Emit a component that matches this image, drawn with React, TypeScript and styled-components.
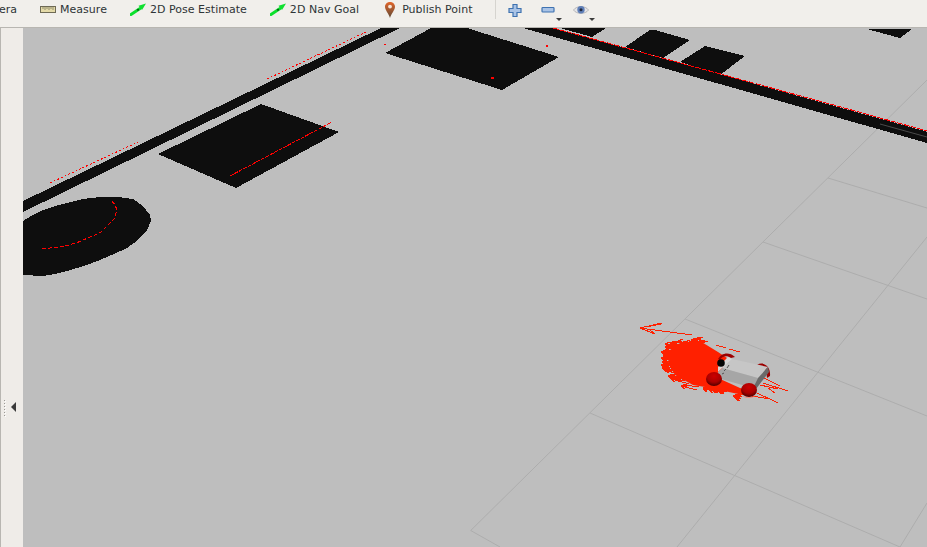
import React from "react";
import styled, { createGlobalStyle } from "styled-components";

const Global = createGlobalStyle`
  html, body { margin: 0; padding: 0; background: #bebebe; overflow: hidden; }
`;

const Page = styled.div`
  width: 927px;
  height: 547px;
  display: flex;
  flex-direction: column;
  overflow: hidden;
  font-family: "DejaVu Sans", sans-serif;
`;

const Toolbar = styled.div`
  height: 27px;
  flex: none;
  display: flex;
  align-items: flex-start;
  gap: 23px;
  background: #f1efeb;
  border-bottom: 1px solid #b8b6b1;
`;

const EdgeLabel = styled.div`
  width: 17px;
  height: 19px;
  display: flex;
  justify-content: flex-end;
  align-items: center;
  font-size: 11px;
  color: #2e3436;
`;

const Tool = styled.div`
  height: 19px;
  display: flex;
  align-items: center;
  gap: 4px;
  font-size: 11px;
  letter-spacing: 0.025px;
  color: #2e3436;
  white-space: nowrap;
`;

const Separator = styled.div`
  width: 1px;
  height: 19px;
  background: #d6d4cf;
`;

const IconGroup = styled.div`
  display: flex;
  gap: 17px;
  margin-left: -12px;
`;

const IconButton = styled.div`
  position: relative;
  width: 16px;
  height: 19px;
  display: flex;
  align-items: center;
  justify-content: center;
`;

const MenuArrow = styled.span`
  position: absolute;
  left: 16px;
  top: 18px;
  width: 0;
  height: 0;
  border-left: 3px solid transparent;
  border-right: 3px solid transparent;
  border-top: 3px solid #3c3c3c;
`;

const Body = styled.div`
  flex: 1;
  display: flex;
  min-height: 0;
`;

const SideStrip = styled.div`
  width: 23px;
  flex: none;
  box-sizing: border-box;
  background: #efece8;
  border-left: 1px solid #b8b6b1;
  padding: 372px 0 0 3px;
  display: flex;
  align-items: flex-start;
  gap: 6px;
  height: 519px;
`;

const Grip = styled.div`
  display: flex;
  flex-direction: column;
  gap: 2px;
`;

const GripDot = styled.span`
  width: 1px;
  height: 1px;
  background: #9a9894;
  box-shadow: 1px 1px 0 #ffffff;
`;

const CollapseArrow = styled.span`
  width: 0;
  height: 0;
  margin-top: 2px;
  border-top: 5px solid transparent;
  border-bottom: 5px solid transparent;
  border-right: 5px solid #3a3a3a;
`;

const Viewport = styled.svg`
  display: block;
  width: 904px;
  height: 519px;
  background: #bebebe;
  flex: none;
`;

const Ruler = () => (
  <svg width="16" height="16" viewBox="0 0 16 16">
    <rect x="0.5" y="4.5" width="15" height="6" fill="#e4daa8" stroke="#6e6a55" />
    <path d="M3 5v2M5 5v3M7 5v2M9 5v3M11 5v2M13 5v3" stroke="#6e6a55" strokeWidth="0.7" />
  </svg>
);

const GreenArrow = () => (
  <svg width="16" height="16" viewBox="0 0 16 16">
    <path d="M1 12.5 L10 6.5" stroke="#0be02c" strokeWidth="3" strokeLinecap="round" />
    <path d="M16 1.5 L8.5 3.8 L12 8 Z" fill="#10e030" />
    <circle cx="8" cy="7.8" r="1.1" fill="#0a5a18" />
  </svg>
);

const Pin = () => (
  <svg width="16" height="18" viewBox="0 0 16 18">
    <defs>
      <linearGradient id="pinGrad" x1="0" y1="0" x2="0" y2="1">
        <stop offset="0" stopColor="#e2662a" />
        <stop offset="1" stopColor="#5e4a38" />
      </linearGradient>
    </defs>
    <path
      d="M8 1 C4.8 1 3 3.2 3 5.8 C3 9 6.6 12.6 8 17 C9.4 12.6 13 9 13 5.8 C13 3.2 11.2 1 8 1 Z"
      fill="url(#pinGrad)"
    />
    <circle cx="8" cy="5.6" r="1.9" fill="#f4e6d8" />
  </svg>
);

const Plus = () => (
  <svg width="16" height="16" viewBox="0 0 16 16">
    <path
      d="M6 2.5h4v4h4v4h-4v4H6v-4H2v-4h4z"
      fill="#a9c3e6"
      stroke="#3f72b0"
      strokeWidth="1.2"
    />
  </svg>
);

const Minus = () => (
  <svg width="16" height="16" viewBox="0 0 16 16">
    <rect x="2" y="5.5" width="12" height="4.5" rx="0.8" fill="#a9c3e6" stroke="#3f72b0" strokeWidth="1.2" />
  </svg>
);

const Eye = () => (
  <svg width="16" height="16" viewBox="0 0 16 16">
    <path d="M0.5 8 C3.5 3.5 12.5 3.5 15.5 8 C12.5 12.5 3.5 12.5 0.5 8 Z" fill="#e6e6e8" stroke="#a8a8ac" strokeWidth="0.8" />
    <circle cx="8" cy="7.8" r="3.7" fill="#5f7fb8" />
    <circle cx="8" cy="7.8" r="1.5" fill="#232a3e" />
  </svg>
);

/* ---- 3D scene data, in page coordinates ---- */

const walls = [
  "23,201 381,28 400,28 23,212",
  "523,28 553,28 927,131.7 927,143",
  "158,154 261,104 339,132 236,188",
  "385,53 431,28 467,28 559,57 502,90",
  "560,28 606,28 592,37",
  "625,47 650,30 655,30 690,40 663,58",
  "680,62 705,46 745,56 720,75",
  "867,29 912,29 900,38",
  "23,221 33,215 43,210 55,206 67,203 83,199 100,197 118,197 133,199 143,206 150,215 151,221 147,230 138,240 127,248 114,254 100,260 84,266 67,271 55,274 43,276 23,275",
];

const gridLines = [
  "470.7,530.5 927,80",
  "470.7,530.5 500,547",
  "590,413 900,547",
  "685,319 927,416",
  "763,242 927,299",
  "828,178 927,208",
  "677,547 927,237",
  "900,547 927,503",
];

const redDashes = [
  { d: "553,28 632,49.7 735,78 830,104 927,131", dash: "6 1" },
  { d: "267,79 368,31", dash: "2 2" },
  { d: "50,183 138,142", dash: "2 2" },
  { d: "230,176 332,122", dash: "4 1" },
  {
    d: "41.7,249 50,248 63,246.7 77,242.7 90,237 100,232.7 107,226 115,218 116.7,210 115,204 111,201",
    dash: "4 2",
  },
];

const blob =
  "670,350 680,343 700,341 718,352 727,358 718,378 740,388 757,392 748,396 705,387 693,385 675,375 668,363";

function seeded(seed: number) {
  let s = seed;
  return () => {
    s = (s * 16807) % 2147483647;
    return s / 2147483647;
  };
}

const particlePaths = (() => {
  const r = seeded(4211);
  const out: string[] = [];
  const arrow = (x: number, y: number, dx: number, dy: number) => {
    const a = Math.round(x);
    const b = Math.round(y);
    out.push(`M${a} ${b}l${dx} ${dy}M${a} ${b}l5 -2M${a} ${b}l4 3`);
  };
  // left fringe
  for (let i = 0; i < 36; i++) {
    const t = r();
    const x = 660 + Math.pow(t - 0.35, 2) * 55 + r() * 5;
    const y = 344 + t * 44;
    arrow(x, y, 10 + Math.round(r() * 6), 2 + Math.round(r() * 2));
  }
  // top fringe
  for (let i = 0; i < 14; i++) {
    const x = 664 + r() * 36;
    const y = 345 - (x - 664) * 0.1 - r() * 3;
    arrow(x, y, 9 + Math.round(r() * 5), 3);
  }
  // bottom fringes
  for (let i = 0; i < 16; i++) {
    const x = 703 + r() * 20;
    const y = 385 + (x - 703) * 0.25 + r() * 4;
    arrow(x, y, 7, 1);
  }
  for (let i = 0; i < 6; i++) {
    const x = 733 + r() * 8;
    const y = 393 + r() * 5;
    arrow(x, y, 5, 1);
  }
  return out.join("");
})();

const Scene = () => (
  <Viewport viewBox="23 28 904 519">
    <defs>
      <radialGradient id="wheel" cx="0.5" cy="0.3" r="0.7">
        <stop offset="0" stopColor="#cc0000" />
        <stop offset="0.6" stopColor="#aa0000" />
        <stop offset="1" stopColor="#4e0000" />
      </radialGradient>
    </defs>
    <g fill="none" stroke="#adadad" strokeWidth="1">
      {gridLines.map((p) => (
        <polyline key={p} points={p} />
      ))}
    </g>
    <g fill="#0e0e0e" shapeRendering="crispEdges">
      {walls.map((p) => (
        <polygon key={p} points={p} />
      ))}
    </g>
    <polyline points="880,124 927,137" fill="none" stroke="#4a4a4a" strokeWidth="1" />
    <g fill="none" stroke="#ff0000" strokeWidth="1" shapeRendering="crispEdges">
      {redDashes.map((l) => (
        <polyline key={l.d} points={l.d} strokeDasharray={l.dash} />
      ))}
    </g>
    <g fill="#ff0000" shapeRendering="crispEdges">
      <rect x="384" y="44" width="2" height="1" />
      <rect x="546" y="45" width="2" height="2" />
      <rect x="491" y="77" width="3" height="2" />
    </g>

    {/* particle cloud */}
    <polygon points={blob} fill="#ff2000" />
    <path d={particlePaths} fill="none" stroke="#ff2000" strokeWidth="1" shapeRendering="crispEdges" />
    <g fill="none" stroke="#ff2000" strokeWidth="1" shapeRendering="crispEdges">
      <path d="M640 328L692 335M640 328L662 323M640 328L655 334M646 327L661 324M650 330L655 334" />
      <path d="M763 383L788 391M757 393L778 403M760 385L778 389M752 396L770 399M764 378L780 386M768 388L775 393" />
      <path d="M740 352L729 349M726 348L716 345" />
    </g>

    {/* robot */}
    <path d="M718 359 C721 353 729 351 735 357 L731 358 C727 355 722 356 720 360 Z" fill="#9c0000" />
    <path d="M757 365 C763 361 771 366 770 376 L767 378 C767 371 763 367 757 365 Z" fill="#9c0000" />
    <polygon points="732,359 768,367 758,378 722,368" fill="#c6c6c6" />
    <polygon points="722,368 758,378 753,388 714,377" fill="#a6a6a6" />
    <polygon points="768,367 769,372 756,389 753,388 758,378" fill="#6a6a6a" />
    <polygon points="722,368 732,359 728,357 718,367 718,372" fill="#d6d6d6" />
    <circle cx="721" cy="363" r="3.8" fill="#050505" />
    <path d="M724 371l2 -2M727 368l2 -3M722 374l2 -1" stroke="#555555" strokeWidth="1" />
    <ellipse cx="714" cy="379" rx="8" ry="7" fill="url(#wheel)" />
    <ellipse cx="749" cy="390" rx="8" ry="7" fill="url(#wheel)" />
    <path d="M741 395 C745 398 752 398 756 395 C753 399 745 399 741 395 Z" fill="#ff7a6a" />
  </Viewport>
);

export default function App() {
  return (
    <Page>
      <Global />
      <Toolbar>
        <EdgeLabel>era</EdgeLabel>
        <Tool>
          <Ruler />
          Measure
        </Tool>
        <Tool>
          <GreenArrow />
          2D Pose Estimate
        </Tool>
        <Tool>
          <GreenArrow />
          2D Nav Goal
        </Tool>
        <Tool>
          <Pin />
          Publish Point
        </Tool>
        <Separator />
        <IconGroup>
          <IconButton>
            <Plus />
          </IconButton>
          <IconButton>
            <Minus />
            <MenuArrow />
          </IconButton>
          <IconButton>
            <Eye />
            <MenuArrow />
          </IconButton>
        </IconGroup>
      </Toolbar>
      <Body>
        <SideStrip>
          <Grip>
            <GripDot />
            <GripDot />
            <GripDot />
            <GripDot />
            <GripDot />
            <GripDot />
          </Grip>
          <CollapseArrow />
        </SideStrip>
        <Scene />
      </Body>
    </Page>
  );
}
